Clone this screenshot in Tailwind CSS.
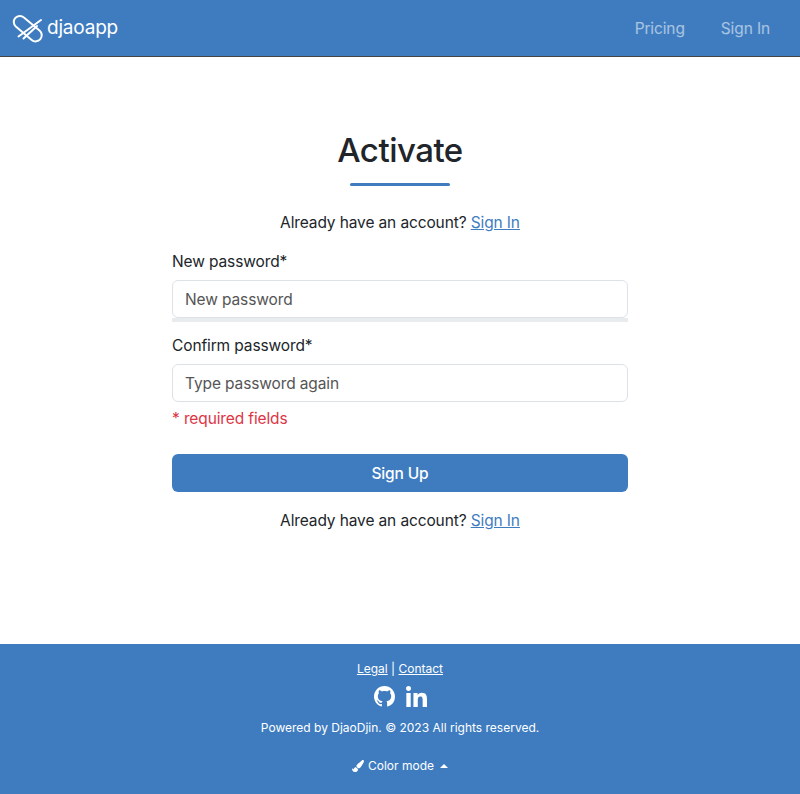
<!DOCTYPE html>
<html lang="en"><head><meta charset="utf-8"><title>Activate</title>
<script src="https://cdn.jsdelivr.net/npm/@tailwindcss/browser@4"></script></head>
<body class="bg-white font-['Inter','Liberation_Sans',sans-serif] text-[#212529] text-[15.5px] tracking-[-0.12px] leading-6 h-[794px] flex flex-col overflow-hidden">
<nav class="h-[57px] shrink-0 bg-[#3e7cbf] border-b border-[#444] flex items-center justify-between pl-3 pr-3">
  <a class="flex items-center gap-[4px] text-white text-[19px]">
    <svg class="w-[31px] h-[30px]" viewBox="0 0 31 30" fill="none" stroke="white" stroke-width="2" stroke-linecap="round" aria-hidden="true">
      <path d="M11.900 4.500 L27.500 17.500 A6 6 0 0 1 19.700 27 L3.800 13.500 A6 6 0 0 1 11.900 4.500Z" />
      <path d="M6.500 23.500 L29 7" /><path d="M11.500 25.500 L25 13" />
    </svg>
    <span class="tracking-[-0.2px]">djaoapp</span>
  </a>
  <div class="flex items-center gap-9 text-white/55 pr-[18px] pt-[1px]">
    <a>Pricing</a><a>Sign In</a>
  </div>
</nav>
<main class="flex-1 w-[456px] mx-auto pt-[71px]">
  <h1 class="text-[33px] leading-[44px] font-medium tracking-[-0.5px] text-center">Activate</h1>
  <div class="w-[100px] h-[3px] bg-[#3e7cbf] rounded-full mx-auto mt-[11px]"></div>
  <p class="text-center mt-[25px]">Already have an account? <a class="text-[#3e7cbf] underline">Sign In</a></p>
  <label class="block mt-[15px]">New password*</label>
  <div class="mt-[6px]">
    <input class="block w-full h-[38px] border border-[#dee2e6] rounded-[6px] px-3 placeholder:text-[#555] outline-none" placeholder="New password">
    <div class="h-1 bg-[#e9ecef]"></div>
  </div>
  <label class="block mt-[12px]">Confirm password*</label>
  <input class="block w-full mt-[6px] h-[38px] border border-[#dee2e6] rounded-[6px] px-3 placeholder:text-[#555] outline-none" placeholder="Type password again">
  <p class="text-[#dc3545] mt-[5px]">* required fields</p>
  <button class="block w-full h-[38px] mt-[23px] pt-[1px] rounded-[6px] bg-[#3e7cbf] text-white font-medium">Sign Up</button>
  <p class="text-center mt-[17px]">Already have an account? <a class="text-[#3e7cbf] underline">Sign In</a></p>
</main>
<footer class="h-[150px] shrink-0 bg-[#3e7cbf] text-white text-xs tracking-normal flex flex-col items-center pt-[16px]">
  <p class="leading-[18px]"><a class="underline">Legal</a> | <a class="underline">Contact</a></p>
  <div class="flex items-center gap-[11px] mt-[6px] h-[24px]">
    <svg class="w-[21px] h-[21px]" viewBox="0 0 16 16" fill="white" aria-hidden="true"><path d="M8 0C3.58 0 0 3.58 0 8c0 3.54 2.29 6.53 5.47 7.59.4.07.55-.17.55-.38 0-.19-.01-.82-.01-1.49-2.01.37-2.53-.49-2.69-.94-.09-.23-.48-.94-.82-1.13-.28-.15-.68-.52-.01-.53.63-.01 1.08.58 1.23.82.72 1.21 1.87.87 2.33.66.07-.52.28-.87.51-1.07-1.78-.2-3.64-.89-3.64-3.95 0-.87.31-1.59.82-2.15-.08-.2-.36-1.02.08-2.12 0 0 .67-.21 2.2.82.64-.18 1.32-.27 2-.27.68 0 1.36.09 2 .27 1.53-1.04 2.2-.82 2.2-.82.44 1.1.16 1.92.08 2.12.51.56.82 1.27.82 2.15 0 3.07-1.87 3.75-3.65 3.95.29.25.54.73.54 1.48 0 1.07-.01 1.93-.01 2.2 0 .21.15.46.55.38A8.013 8.013 0 0016 8c0-4.42-3.58-8-8-8z"/></svg>
    <svg class="w-[21px] h-[21px]" viewBox="0 0 448 448" fill="white" aria-hidden="true"><path d="M100.28 448H7.4V148.9h92.88zM53.79 108.1C24.09 108.1 0 83.5 0 53.8a53.79 53.79 0 0 1 107.58 0c0 29.7-24.1 54.3-53.79 54.3zM447.9 448h-92.68V302.4c0-34.7-.7-79.2-48.29-79.2-48.29 0-55.69 37.7-55.69 76.7V448h-92.78V148.9h89.08v40.8h1.3c12.4-23.5 42.69-48.3 87.88-48.3 94 0 111.28 61.9 111.28 142.3V448z"/></svg>
  </div>
  <p class="mt-[11px] leading-[18px]">Powered by DjaoDjin. © 2023 All rights reserved.</p>
  <div class="mt-[20px] flex items-center leading-[18px]">
    <svg class="w-3 h-3 mr-[4px]" viewBox="0 0 512 512" fill="white" aria-hidden="true"><path d="M167.02 309.34c-40.12 2.58-76.53 17.86-97.19 72.3-2.35 6.21-8 9.98-14.59 9.98-11.11 0-45.46-27.67-55.25-34.35C0 439.62 37.93 512 128 512c75.86 0 128-43.77 128-120.19 0-3.11-.65-6.08-.97-9.13l-88.01-73.34zM457.89 0c-15.16 0-29.37 6.71-40.21 16.45C213.27 199.05 192 203.34 192 257.09c0 13.7 3.25 26.76 8.73 38.7l63.82 53.18c7.21 1.8 14.64 3.03 22.39 3.03 62.11 0 98.11-45.47 211.16-256.46 7.38-14.35 13.9-29.85 13.9-45.99C512 20.64 486 0 457.89 0z"/></svg>
    <span>Color mode</span>
    <span class="ml-[6px] w-0 h-0 border-x-[4px] border-x-transparent border-b-[4px] border-b-white"></span>
  </div>
</footer>
</body></html>
